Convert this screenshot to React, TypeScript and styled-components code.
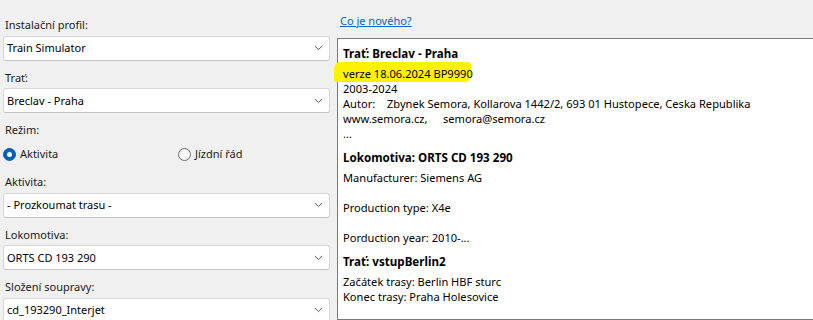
import React from "react";
import styled, { createGlobalStyle } from "styled-components";

const GlobalStyle = createGlobalStyle`
  html, body { margin: 0; padding: 0; background: #f0f0f0; }
  body { font-family: "Noto Sans", "Open Sans", sans-serif; font-size: 11px; color: #000; }
`;

const Page = styled.div`
  display: flex;
  width: 813px;
  height: 320px;
  overflow: hidden;
  background: #f0f0f0;
`;

const LeftColumn = styled.div`
  width: 327px;
  margin-left: 3px;
  padding-top: 17px;
  display: flex;
  flex-direction: column;
  flex-shrink: 0;
`;

const Field = styled.div<{ $gap?: number }>`
  display: flex;
  flex-direction: column;
  margin-bottom: ${(p) => p.$gap ?? 9}px;
`;

const Label = styled.div<{ $mb?: number }>`
  line-height: 16px;
  height: 16px;
  padding-left: 2px;
  color: #1b1b1b;
  margin-bottom: ${(p) => p.$mb ?? 2.5}px;
  white-space: nowrap;
`;

const Combo = styled.div`
  box-sizing: border-box;
  height: 25px;
  background: #fff;
  border: 1px solid #d6d6d6;
  border-bottom-color: #c4c4c4;
  border-radius: 3px;
  display: flex;
  align-items: center;
  padding: 0 6px 0 3px;
  justify-content: space-between;
`;

const ComboText = styled.span`
  line-height: 16px;
  color: #000;
`;

const Chevron = () => (
  <svg width="9" height="6" viewBox="0 0 9 6" style={{ display: "block" }}>
    <path d="M0.8 1 L4.5 4.6 L8.2 1" fill="none" stroke="#5e5e5e" strokeWidth="1" />
  </svg>
);

const RadioRow = styled.div`
  display: grid;
  grid-template-columns: 175px 1fr;
  height: 16px;
  align-items: center;
  margin-bottom: 12px;
`;

const RadioItem = styled.label`
  display: flex;
  align-items: center;
  gap: 4px;
  line-height: 16px;
  color: #1b1b1b;
`;

const RadioDot = styled.span<{ $checked?: boolean }>`
  box-sizing: border-box;
  width: 13px;
  height: 13px;
  border-radius: 50%;
  flex-shrink: 0;
  display: flex;
  align-items: center;
  justify-content: center;
  background: ${(p) => (p.$checked ? "#005fb8" : "#f7f7f7")};
  border: 1px solid ${(p) => (p.$checked ? "#005fb8" : "#6f6f6f")};
  &::after {
    content: "";
    display: ${(p) => (p.$checked ? "block" : "none")};
    width: 5px;
    height: 5px;
    border-radius: 50%;
    background: #fff;
  }
`;

const RightColumn = styled.div`
  flex: 1;
  display: flex;
  flex-direction: column;
  padding-left: 7px;
  padding-top: 13px;
  min-width: 0;
`;

const NewsLink = styled.a`
  color: #0066cc;
  text-decoration: underline;
  line-height: 16px;
  margin-left: 3px;
  margin-bottom: 9px;
  align-self: flex-start;
  cursor: pointer;
`;

const InfoPanel = styled.div`
  flex: 1;
  background: #fff;
  border: 1px solid #7a7a7a;
  margin-right: -20px;
  padding: 6.5px 5px 0 5px;
  isolation: isolate;
  font-size: 11.1px;
`;

const Section = styled.div`
  margin-bottom: 9px;
`;

const Heading = styled.div`
  font-weight: 700;
  font-size: 11.6px;
  line-height: 15px;
  margin-bottom: 5px;
  white-space: nowrap;
`;

const Line = styled.div`
  line-height: 15px;
  min-height: 15px;
  white-space: pre;
`;

const Highlighted = styled.span`
  position: relative;
  &::before {
    content: "";
    position: absolute;
    left: -9px;
    top: -4px;
    width: 137px;
    height: 20px;
    background: #fff200;
    border-radius: 7px 3px 6px 2px;
    z-index: -1;
  }
`;

const Tab = styled.span<{ $w: number }>`
  display: inline-block;
  width: ${(p) => p.$w}px;
`;

const fields = [
  { label: "Instalační profil:", value: "Train Simulator" },
  { label: "Trať:", value: "Breclav - Praha" },
];
const fields2 = [
  { label: "Aktivita:", value: "- Prozkoumat trasu -" },
  { label: "Lokomotiva:", value: "ORTS CD 193 290" },
  { label: "Složení soupravy:", value: "cd_193290_Interjet" },
];

export default function App() {
  return (
    <>
      <GlobalStyle />
      <Page>
        <LeftColumn>
          {fields.map((f) => (
            <Field key={f.label}>
              <Label>{f.label}</Label>
              <Combo>
                <ComboText>{f.value}</ComboText>
                <Chevron />
              </Combo>
            </Field>
          ))}
          <Field $gap={0}>
            <Label $mb={8}>Režim:</Label>
            <RadioRow>
              <RadioItem>
                <RadioDot $checked />
                Aktivita
              </RadioItem>
              <RadioItem>
                <RadioDot />
                Jízdní řád
              </RadioItem>
            </RadioRow>
          </Field>
          {fields2.map((f) => (
            <Field key={f.label}>
              <Label>{f.label}</Label>
              <Combo>
                <ComboText>{f.value}</ComboText>
                <Chevron />
              </Combo>
            </Field>
          ))}
        </LeftColumn>
        <RightColumn>
          <NewsLink>Co je nového?</NewsLink>
          <InfoPanel>
            <Section>
              <Heading>Trať: Breclav - Praha</Heading>
              <Line>
                <Highlighted>verze 18.06.2024 BP9990</Highlighted>
              </Line>
              <Line>2003-2024</Line>
              <Line>
                <Tab $w={44}>Autor:</Tab>Zbynek Semora, Kollarova 1442/2, 693 01 Hustopece, Ceska Republika
              </Line>
              <Line>
                <Tab $w={100}>www.semora.cz,</Tab>semora@semora.cz
              </Line>
              <Line>...</Line>
            </Section>
            <Section>
              <Heading>Lokomotiva: ORTS CD 193 290</Heading>
              <Line>Manufacturer: Siemens AG</Line>
              <Line />
              <Line>Production type: X4e</Line>
              <Line />
              <Line>Porduction year: 2010-...</Line>
            </Section>
            <Section>
              <Heading>Trať: vstupBerlin2</Heading>
              <Line>Začátek trasy: Berlin HBF sturc</Line>
              <Line>Konec trasy: Praha Holesovice</Line>
            </Section>
          </InfoPanel>
        </RightColumn>
      </Page>
    </>
  );
}
